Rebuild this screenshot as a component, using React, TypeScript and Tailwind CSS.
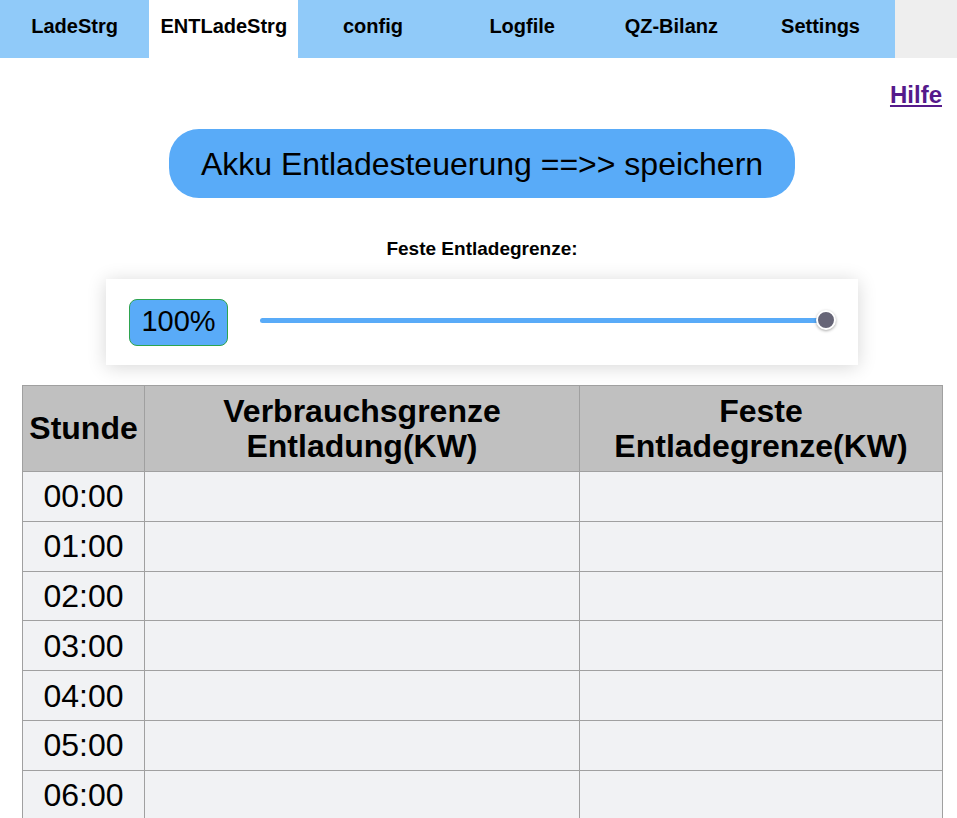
const tabs = ['LadeStrg', 'ENTLadeStrg', 'config', 'Logfile', 'QZ-Bilanz', 'Settings'];
const hours = ['00:00', '01:00', '02:00', '03:00', '04:00', '05:00', '06:00', '07:00', '08:00'];

export default function App() {
    return (
        <div className="min-h-screen bg-white text-black font-['Liberation_Sans',Arial,sans-serif]">
            {/* Tab bar */}
            <div className="flex h-[58px] bg-[#eeeeee]">
                {tabs.map((tab) => (
                    <div
                        key={tab}
                        className={`w-[149.2px] flex items-center justify-center text-[20px] font-bold pb-[6px] ${tab === 'ENTLadeStrg' ? 'bg-white' : 'bg-[#90caf9]'}`}
                    >
                        {tab}
                    </div>
                ))}
            </div>

            <div className="pl-[22px] pr-[15px] pb-10">
                <div className="flex justify-end pt-[23px]">
                    <a href="#" className="text-[24px] font-bold text-[#551a8b] underline leading-[28px]">Hilfe</a>
                </div>

                <div className="flex justify-center mt-[20px]">
                    <button className="w-[626px] h-[69px] rounded-[30px] bg-[#59abf8] text-[32px] text-black flex items-center justify-center">
                        Akku Entladesteuerung ==&gt;&gt; speichern
                    </button>
                </div>

                <div className="text-center text-[19px] font-bold mt-[40px] leading-[22px]">Feste Entladegrenze:</div>

                {/* Slider panel */}
                <div className="mx-auto mt-[19px] w-[752px] h-[86px] bg-white shadow-[0_2px_18px_rgba(0,0,0,0.16)] flex items-center pl-[23px] pr-[22px]">
                    <div className="w-[99px] h-[47px] rounded-[8px] bg-[#59abf8] border border-[#2ea44f] flex items-center justify-center text-[29px]">
                        100%
                    </div>
                    <div className="relative flex-1 ml-[32px] h-[20px] mt-[-4px] flex items-center">
                        <div className="w-full mr-[10px] h-[5px] rounded-full bg-[#59abf8]"></div>
                        <div className="absolute right-0 top-0 w-[20px] h-[20px] rounded-full bg-[#666577] border-2 border-white shadow-[0_1px_3px_rgba(0,0,0,0.35)]"></div>
                    </div>
                </div>

                {/* Table */}
                <table className="mt-[20px] w-[920px] table-fixed border-collapse border border-[#a0a0a0]">
                    <colgroup>
                        <col className="w-[122px]" />
                        <col className="w-[435px]" />
                        <col className="w-[363px]" />
                    </colgroup>
                    <thead>
                        <tr className="h-[86px] bg-[#c0c0c0] text-[32px] font-bold leading-[35px]">
                            <th className="border border-[#a0a0a0] px-1">Stunde</th>
                            <th className="border border-[#a0a0a0] px-1">Verbrauchsgrenze<br />Entladung(KW)</th>
                            <th className="border border-[#a0a0a0] px-1">Feste<br />Entladegrenze(KW)</th>
                        </tr>
                    </thead>
                    <tbody>
                        {hours.map((h) => (
                            <tr key={h} className="h-[49.8px] bg-[#f1f2f4] text-[32px]">
                                <td className="border border-[#a0a0a0] text-center">{h}</td>
                                <td className="border border-[#a0a0a0]"></td>
                                <td className="border border-[#a0a0a0]"></td>
                            </tr>
                        ))}
                    </tbody>
                </table>
            </div>
        </div>
    );
}
